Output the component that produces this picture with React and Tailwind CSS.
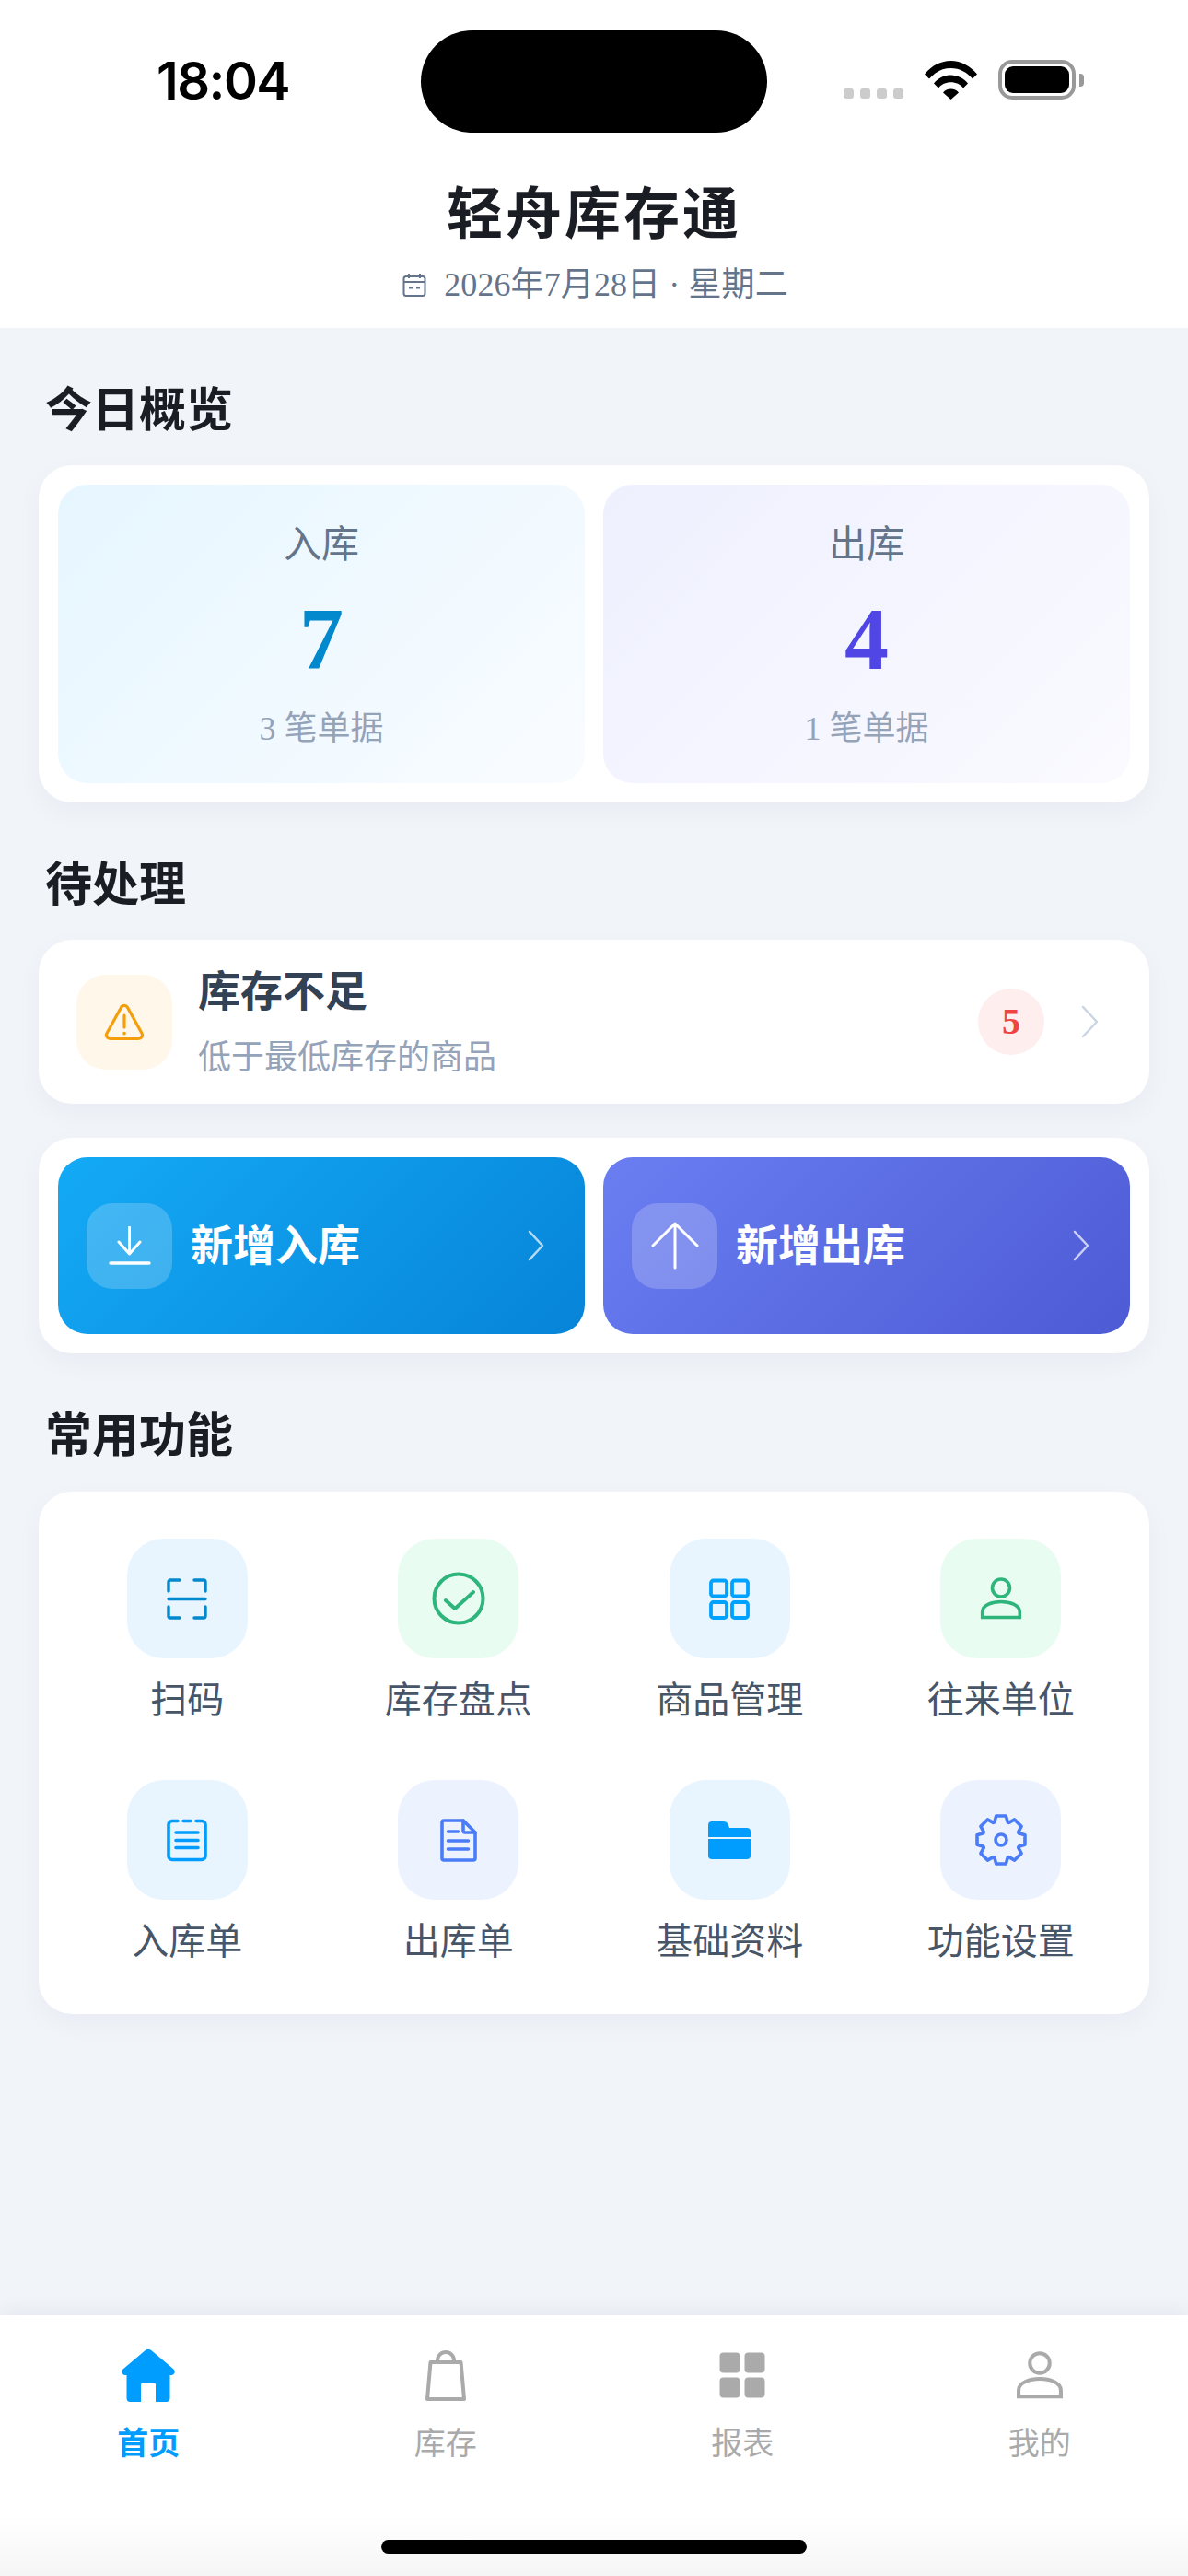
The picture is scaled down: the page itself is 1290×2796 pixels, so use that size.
const Chevron = ({ className }) => (
  <svg className={className} viewBox="0 0 20 36" fill="none" stroke="currentColor" strokeWidth="2.5" strokeLinecap="round" strokeLinejoin="round">
    <path d="M2 2l15 16L2 34" />
  </svg>
);

const ScanIcon = () => (
  <svg className="w-[46px] h-[47px] text-[#0288cc]" viewBox="0 0 46 47" fill="none" stroke="currentColor" strokeWidth="3.4" strokeLinecap="round" strokeLinejoin="round">
    <path d="M3 15V5a2 2 0 0 1 2-2h10M31 3h10a2 2 0 0 1 2 2v10M3 32v10a2 2 0 0 0 2 2h10M31 44h10a2 2 0 0 0 2-2V32M3 23.5h40" />
  </svg>
);

const CheckIcon = () => (
  <svg className="w-[58px] h-[58px] text-[#2db57c]" viewBox="0 0 58 58" fill="none" stroke="currentColor" strokeWidth="4" strokeLinecap="round" strokeLinejoin="round">
    <circle cx="29" cy="29" r="26.5" />
    <path d="M15 31l10 9 20-18" />
  </svg>
);

const GridIcon = () => (
  <svg className="w-[44px] h-[45px] text-[#00a2ff]" viewBox="0 0 44 45" fill="none" stroke="currentColor" strokeWidth="3.8">
    <rect x="2" y="2.5" width="17" height="17" rx="2.5" />
    <rect x="25" y="2.5" width="17" height="17" rx="2.5" />
    <rect x="2" y="26" width="17" height="17" rx="2.5" />
    <rect x="25" y="26" width="17" height="17" rx="2.5" />
  </svg>
);

const PersonIcon = ({ className }) => (
  <svg className={className} viewBox="0 0 46 46" fill="none" stroke="currentColor" strokeWidth="3.6">
    <circle cx="23" cy="11.5" r="9.5" />
    <path d="M2.700 43.500v-6c0-7.500 11-11 20.300-11s20.300 3.500 20.300 11v6z" />
  </svg>
);

const ClipboardIcon = () => (
  <svg className="w-[44px] h-[47px] text-[#009dff]" viewBox="0 0 44 47" fill="none" stroke="currentColor" strokeWidth="3.6" strokeLinecap="round">
    <path d="M12 2.500H6a4 4 0 0 0-4 4v34a4 4 0 0 0 4 4h32a4 4 0 0 0 4-4v-34a4 4 0 0 0-4-4h-6M18 2.500h8" />
    <path d="M10 15h24M10 23.500h24M10 31.500h24" />
  </svg>
);

const DocIcon = () => (
  <svg className="w-[40px] h-[47px] text-[#4a7cf7]" viewBox="0 0 40 47" fill="none" stroke="currentColor" strokeWidth="3.6" strokeLinecap="round" strokeLinejoin="round">
    <path d="M2 4a2 2 0 0 1 2-2h21l13 13v28a2 2 0 0 1-2 2H4a2 2 0 0 1-2-2z" />
    <path d="M25 2v11a2 2 0 0 0 2 2h11" />
    <path d="M8.500 14h11M8.500 24h22M8.500 33h22" />
  </svg>
);

const FolderIcon = () => (
  <svg className="w-[46px] h-[41px] text-[#009dff]" viewBox="0 0 46 41" fill="currentColor">
    <path d="M0 4a4 4 0 0 1 4-4h12.500a6 6 0 0 1 5.500 4l1 3h19a4 4 0 0 1 4 4v6H0z" />
    <path d="M0 19h46v18a4 4 0 0 1-4 4H4a4 4 0 0 1-4-4z" />
  </svg>
);

// eight teeth, worked out once so the cog stays symmetric
const gearPoints = Array.from({ length: 8 }, (_, i) => {
  const a = (i * 45 * Math.PI) / 180;
  return [[20.5, -0.36], [26.5, -0.2], [26.5, 0.2], [20.5, 0.36]]
    .map(([r, d]) => `${(30 + r * Math.sin(a + d)).toFixed(2)},${(30 - r * Math.cos(a + d)).toFixed(2)}`)
    .join(' ');
}).join(' ');

const GearIcon = () => (
  <svg className="w-[60px] h-[60px] text-[#4a7cf7]" viewBox="0 0 60 60" fill="none" stroke="currentColor" strokeWidth="3.6" strokeLinejoin="round">
    <polygon points={gearPoints} />
    <circle cx="30" cy="30" r="6" />
  </svg>
);

const WarnIcon = () => (
  <svg className="w-[44px] h-[41px] text-[#f59e0b]" viewBox="0 0 44 41" fill="none" stroke="currentColor" strokeWidth="3.2" strokeLinecap="round" strokeLinejoin="round">
    <path d="M18.500 4.500a4 4 0 0 1 7 0l15.500 28a4 4 0 0 1-3.500 6h-31a4 4 0 0 1-3.500-6z" />
    <path d="M22 13v13" />
    <path d="M22 32.500v.3" strokeWidth="3.600" />
  </svg>
);

const DownloadIcon = () => (
  <svg className="w-[46px] h-[42px] text-white" viewBox="0 0 46 42" fill="none" stroke="currentColor" strokeWidth="3" strokeLinecap="round" strokeLinejoin="round">
    <path d="M22.500 1v29M11 17l11.500 13L34 17" />
    <path d="M2 40h42" strokeWidth="3.400" />
  </svg>
);

const UpIcon = () => (
  <svg className="w-[52px] h-[52px] text-white" viewBox="0 0 52 52" fill="none" stroke="currentColor" strokeWidth="3" strokeLinecap="round" strokeLinejoin="round">
    <path d="M26 2v48M2 26L26 2l24 24" />
  </svg>
);

const CalendarIcon = () => (
  <svg className="w-[26px] h-[26px] text-[#64748b]" viewBox="0 0 26 26" fill="none" stroke="currentColor" strokeWidth="2">
    <rect x="1.500" y="4" width="23" height="21" rx="2.500" />
    <path d="M7 1v5M19 1v5M1.500 10h23M7 16.500h4M15 16.500h4" />
  </svg>
);

const HomeIcon = () => (
  <svg className="w-[58px] h-[57px] text-[#009dff]" viewBox="0 0 58 57" fill="currentColor">
    <path d="M25.500 1.300a5 5 0 0 1 7 0L56.500 21.500c2.500 2.300 1 6.500-2.500 6.500h-1.500v25a4 4 0 0 1-4 4H37V38.500a2.500 2.500 0 0 0-2.500-2.500h-11a2.500 2.500 0 0 0-2.500 2.500V57H9.500a4 4 0 0 1-4-4V28H4c-3.500 0-5-4.200-2.500-6.500z" />
  </svg>
);

const BagIcon = () => (
  <svg className="w-[44px] h-[55px] text-[#aaaaaa]" viewBox="0 0 44 55" fill="none" stroke="currentColor" strokeWidth="4" strokeLinejoin="round">
    <path d="M5.500 13h33l3.500 40H2z" />
    <path d="M13 13V11a9 9 0 0 1 18 0v2" />
  </svg>
);

const ReportIcon = () => (
  <svg className="w-[50px] h-[50px] text-[#aaaaaa]" viewBox="0 0 50 50" fill="currentColor">
    <rect x="0.500" y="0.500" width="22" height="22" rx="4" />
    <rect x="27.500" y="0.500" width="22" height="22" rx="4" />
    <rect x="0.500" y="27.500" width="22" height="22" rx="4" />
    <rect x="27.500" y="27.500" width="22" height="22" rx="4" />
  </svg>
);

const WifiIcon = () => (
  <svg className="w-[57px] h-[42px]" viewBox="0 0 57 42" fill="#000">
    <path d="M0 14.500C7.500 5.500 17.500 0 28.500 0S49.500 5.500 57 14.500l-5 5C46 12.500 38 8 28.500 8S11 12.500 5 19.500z" />
    <path d="M10 24.500C14.500 19 21 15.500 28.500 15.500S42.500 19 47 24.500l-5 5c-3.300-4-8-6.200-13.500-6.200S18.300 25.500 15 29.500z" />
    <path d="M20 34.500c2-2.500 5-4 8.500-4s6.500 1.500 8.500 4L28.500 42z" />
  </svg>
);

const features = [
  { label: '扫码', bg: 'bg-[#e8f5ff]', icon: <ScanIcon /> },
  { label: '库存盘点', bg: 'bg-[#e9fcf2]', icon: <CheckIcon /> },
  { label: '商品管理', bg: 'bg-[#e8f5ff]', icon: <GridIcon /> },
  { label: '往来单位', bg: 'bg-[#e9fcf2]', icon: <PersonIcon className="w-[46px] h-[46px] text-[#2db57c]" /> },
  { label: '入库单', bg: 'bg-[#e8f5ff]', icon: <ClipboardIcon /> },
  { label: '出库单', bg: 'bg-[#edf2ff]', icon: <DocIcon /> },
  { label: '基础资料', bg: 'bg-[#e8f5ff]', icon: <FolderIcon /> },
  { label: '功能设置', bg: 'bg-[#edf2ff]', icon: <GearIcon /> },
];

const tabs = [
  { label: '首页', icon: <HomeIcon />, active: true },
  { label: '库存', icon: <BagIcon /> },
  { label: '报表', icon: <ReportIcon /> },
  { label: '我的', icon: <PersonIcon className="w-[52px] h-[52px] text-[#aaaaaa]" /> },
];

function StatCard({ label, value, note, bg, color }) {
  return (
    <div className={`flex-1 h-[324px] rounded-[32px] flex flex-col items-center pt-[40px] ${bg}`}>
      <div className="text-[41px] leading-[50px] text-[#64748b]">{label}</div>
      <div className={`mt-[30px] text-[96px] leading-[96px] font-bold ${color}`}>{value}</div>
      <div className="mt-[27px] text-[36px] leading-[44px] text-[#94a3b8]">{note}</div>
    </div>
  );
}

function ActionButton({ label, icon, bg }) {
  return (
    <div className={`flex-1 h-[192px] rounded-[32px] flex items-center pl-[31px] pr-[43px] ${bg}`}>
      <div className="w-[93px] h-[93px] rounded-[28px] bg-white/20 flex items-center justify-center">{icon}</div>
      <div className="ml-[20px] text-[46px] font-bold text-white">{label}</div>
      <Chevron className="ml-auto w-[19px] h-[34px] text-white/70" />
    </div>
  );
}

function Heading({ children, className }) {
  return <h2 className={`pl-[7px] text-[51px] leading-[70px] font-bold text-[#1a1d23] ${className}`}>{children}</h2>;
}

export default function App() {
  return (
    <div className="relative w-[1290px] h-[2796px] flex flex-col overflow-hidden bg-[#f1f4f9] font-['Liberation_Serif','Noto_Sans_CJK_SC',serif]">
      <header className="h-[356px] bg-white shrink-0">
        <div className="h-[177px] flex pt-[33px]">
          <div className="w-[457px] pl-[170px] pt-[20px] text-[56px] leading-[70px] font-semibold tracking-[-1.5px] text-black font-['Inter',sans-serif]">18:04</div>
          <div className="w-[376px] h-[111px] rounded-full bg-black" />
          <div className="ml-[83px] mt-[32px] h-[43px] flex items-end">
            <div className="flex gap-[7px] mb-[1px]">
              <span className="w-[11px] h-[11px] rounded-[3px] bg-[#cccccc]" />
              <span className="w-[11px] h-[11px] rounded-[3px] bg-[#cccccc]" />
              <span className="w-[11px] h-[11px] rounded-[3px] bg-[#cccccc]" />
              <span className="w-[11px] h-[11px] rounded-[3px] bg-[#cccccc]" />
            </div>
            <div className="ml-[23px]"><WifiIcon /></div>
            <div className="ml-[23px] w-[84px] h-[43px] rounded-[15px] border-[4px] border-[#999999] p-[3px]">
              <div className="w-full h-full rounded-[9px] bg-black" />
            </div>
            <div className="ml-[4px] mb-[14px] w-[5px] h-[14px] rounded-r-[4px] bg-[#999999]" />
          </div>
        </div>
        <h1 className="mt-[22px] text-center text-[61px] leading-[70px] font-bold tracking-[3px] text-[#1a1d23]">轻舟库存通</h1>
        <div className="mt-[18px] h-[44px] flex items-center justify-center gap-[19px] pl-[3px] text-[36px] leading-[44px] tracking-[0.1px] text-[#64748b]">
          <CalendarIcon />
          <span>2026年7月28日 · 星期二</span>
        </div>
      </header>

      <main className="flex-1 px-[42px]">
        <Heading className="mt-[55px] mb-[24px]">今日概览</Heading>
        <section className="rounded-[36px] bg-white p-[21px] flex gap-[20px] shadow-[0_10px_30px_rgba(15,23,42,0.04)]">
          <StatCard label="入库" value="7" note="3 笔单据" color="text-[#0288cc]" bg="bg-[linear-gradient(135deg,#e6f6ff,#f9fcff)]" />
          <StatCard label="出库" value="4" note="1 笔单据" color="text-[#4f46e5]" bg="bg-[linear-gradient(135deg,#eef0fe,#fafaff)]" />
        </section>

        <Heading className="mt-[55px] mb-[24px]">待处理</Heading>
        <section className="h-[178px] rounded-[36px] bg-white flex items-center pl-[41px] pr-[54px] shadow-[0_10px_30px_rgba(15,23,42,0.04)]">
          <div className="w-[104px] h-[103px] rounded-[32px] bg-[#fff7ea] flex items-center justify-center"><WarnIcon /></div>
          <div className="ml-[28px]">
            <div className="text-[46px] leading-[56px] font-semibold text-[#334155]">库存不足</div>
            <div className="mt-[21px] text-[36px] leading-[44px] text-[#94a3b8]">低于最低库存的商品</div>
          </div>
          <div className="ml-auto w-[72px] h-[72px] rounded-full bg-[#feeeee] flex items-center justify-center text-[40px] font-bold text-[#ef4444]">5</div>
          <Chevron className="ml-[40px] w-[20px] h-[36px] text-[#cbd5e1]" />
        </section>

        <section className="mt-[37px] rounded-[36px] bg-white p-[21px] flex gap-[20px] shadow-[0_10px_30px_rgba(15,23,42,0.04)]">
          <ActionButton label="新增入库" icon={<DownloadIcon />} bg="bg-[linear-gradient(135deg,#14aaf5,#0784d8)]" />
          <ActionButton label="新增出库" icon={<UpIcon />} bg="bg-[linear-gradient(135deg,#6a7ef2,#4d5bd4)]" />
        </section>

        <Heading className="mt-[55px] mb-[25px]">常用功能</Heading>
        <section className="rounded-[36px] bg-white h-[567px] px-[14px] pt-[51px] grid grid-cols-4 content-start gap-y-[62px] shadow-[0_10px_30px_rgba(15,23,42,0.04)]">
          {features.map(f => (
            <div key={f.label} className="flex flex-col items-center">
              <div className={`w-[131px] h-[130px] rounded-[40px] flex items-center justify-center ${f.bg}`}>{f.icon}</div>
              <div className="mt-[22px] text-[40px] leading-[48px] text-[#475569]">{f.label}</div>
            </div>
          ))}
        </section>
      </main>

      <nav className="relative h-[283px] shrink-0 grid grid-cols-4 pt-[35px] bg-[linear-gradient(to_bottom,#ffffff_77%,#f5f5f5_100%)] shadow-[0_-6px_20px_rgba(15,23,42,0.05)]">
        {tabs.map(t => (
          <div key={t.label} className="flex flex-col items-center">
            <div className="h-[60px] flex items-center justify-center">{t.icon}</div>
            <div className={`mt-[25px] text-[34px] leading-[40px] ${t.active ? 'font-semibold text-[#009dff]' : 'text-[#aaaaaa]'}`}>{t.label}</div>
          </div>
        ))}
        <div className="absolute left-[414px] bottom-[24px] w-[462px] h-[15px] rounded-full bg-black" />
      </nav>
    </div>
  );
}
